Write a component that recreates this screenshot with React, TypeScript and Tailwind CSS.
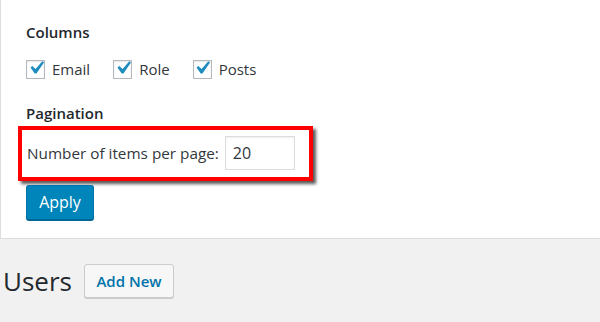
import { type ReactNode } from 'react';

const font = { fontFamily: '"Open Sans", "Noto Sans", sans-serif' };

function CheckItem({ label }: { label: string }) {
  return (
    <label className="flex items-center gap-[7px] text-[15px] text-[#32373c]">
      <span className="flex items-center justify-center w-[19px] h-[19px] border border-[#b4b9be] bg-white shadow-[inset_0_1px_2px_rgba(0,0,0,0.1)]">
        <svg viewBox="0 0 20 20" className="w-[26px] h-[26px] -mt-[3px] shrink-0">
          <path
            d="M14.83 4.89l1.34.94-5.81 8.38H9.02L5.78 9.67l1.34-1.25 2.57 2.4z"
            fill="#1e8cbe"
          />
        </svg>
      </span>
      {label}
    </label>
  );
}

function Heading({ children }: { children: ReactNode }) {
  return <h5 className="text-[15px] font-semibold text-[#23282d] leading-[20px]">{children}</h5>;
}

export default function App() {
  return (
    <div className="w-[600px] h-[322px] bg-[#f1f1f1] overflow-hidden" style={font}>
      {/* screen options panel */}
      <div className="h-[239px] bg-white border-l border-b border-[#dddddd] pl-[25px] pt-[22px]">
        <Heading>Columns</Heading>
        <div className="flex items-center gap-[23px] mt-[16px]">
          <CheckItem label="Email" />
          <CheckItem label="Role" />
          <CheckItem label="Posts" />
        </div>

        <div className="mt-[22px]">
          <Heading>Pagination</Heading>
        </div>

        <div className="-ml-[8px] mt-[3px] w-[295px] h-[55px] border-4 border-[#ff0000] shadow-[3px_3px_3px_rgba(0,0,0,0.65)] flex items-center pl-[5px]">
          <span className="text-[15.3px] text-[#32373c]">Number of items per page:</span>
          <input
            readOnly
            value="20"
            className="ml-[6px] w-[70px] h-[34px] border border-[#dddddd] px-[7px] text-[16px] text-[#32373c] shadow-[inset_0_1px_2px_rgba(0,0,0,0.07)] outline-none"
          />
        </div>

        <button className="mt-[4px] w-[68px] h-[35px] rounded-[3px] bg-[#0085ba] border border-[#0073aa] border-b-[#006799] shadow-[0_1px_0_#006799] text-white text-[16px]">
          Apply
        </button>
      </div>

      {/* page title */}
      <div className="flex items-center pl-[3px] pt-[24px]">
        <h1 className="text-[26px] font-normal text-[#23282d] leading-[36px]">Users</h1>
        <button className="ml-[12px] w-[90px] h-[34px] rounded-[3px] bg-[#f7f7f7] border border-[#cccccc] shadow-[0_1px_0_#cccccc] text-[#0073aa] text-[15px] font-semibold">
          Add New
        </button>
      </div>
    </div>
  );
}
